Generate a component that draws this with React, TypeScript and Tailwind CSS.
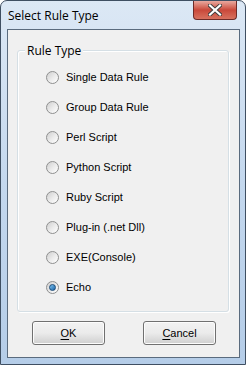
const ruleTypes = [
  "Single Data Rule",
  "Group Data Rule",
  "Perl Script",
  "Python Script",
  "Ruby Script",
  "Plug-in (.net Dll)",
  "EXE(Console)",
  "Echo",
];

function CloseButton() {
  return (
    <div className="mr-[3px] flex h-[19px] w-[44px] items-center justify-center rounded-b-[4px] border border-t-0 border-[#6d2b28] bg-gradient-to-b from-[#e8a89f] via-[#c9483a] to-[#d7715f]">
      <svg width="14" height="12" viewBox="0 0 14 12">
        <path d="M2 1.5 L12 10.5 M12 1.5 L2 10.5" stroke="#3d3d3d" strokeWidth="4" strokeLinecap="square" />
        <path d="M2 1.5 L12 10.5 M12 1.5 L2 10.5" stroke="#ffffff" strokeWidth="2.2" strokeLinecap="square" />
      </svg>
    </div>
  );
}

function Radio({ label, checked }: { label: string; checked?: boolean }) {
  return (
    <label className="flex h-[30px] items-center gap-[7px]">
      <span className="flex h-[13px] w-[13px] items-center justify-center rounded-full border border-[#8e8f8f] bg-gradient-to-br from-[#cfcfcf] via-[#eaeaea] to-[#ffffff]">
        {checked && (
          <span className="h-[7px] w-[7px] rounded-full border border-[#1a4a78] bg-gradient-to-br from-[#7ec3f0] to-[#1565a8]" />
        )}
      </span>
      <span>{label}</span>
    </label>
  );
}

function DialogButton({ hotkey, rest }: { hotkey: string; rest: string }) {
  return (
    <button className="h-[24px] w-[73px] rounded-[3px] border border-[#707070] bg-gradient-to-b from-[#f2f2f2] via-[#ebebeb] to-[#cfcfcf] text-center text-black shadow-[inset_0_0_0_1px_#fcfcfc]">
      <span className="underline underline-offset-[2px]">{hotkey}</span>
      {rest}
    </button>
  );
}

export default function App() {
  return (
    <div className="flex h-[365px] w-[246px] flex-col rounded-t-[7px] border border-[#3f4f62] bg-gradient-to-b from-[#dce8f5] via-[#c4d8ee] to-[#b5cde8] pb-[6px] pl-[6px] pr-[5px] font-['Liberation_Sans',sans-serif] text-[11px] text-black">
      <div className="flex h-[28px] items-start justify-between">
        <span className="mt-[7px] pl-[1px] font-['Open_Sans',sans-serif] text-[12px] leading-[15px] text-black">
          Select Rule Type
        </span>
        <CloseButton />
      </div>

      <div className="flex flex-1 flex-col border border-[#5a6b7e] bg-[#f0f0f0]">
        <div className="relative ml-[9px] mr-[10px] mt-[20px] rounded-[3px] border border-[#d5dfe5] pb-[9px] pl-[28px] pt-[11px] shadow-[inset_1px_1px_0_#ffffff,1px_1px_0_#ffffff]">
          <span className="absolute left-[7px] top-[-8px] bg-[#f0f0f0] px-[2px] font-['Open_Sans',sans-serif] text-[12px] leading-[15px]">
            Rule Type
          </span>
          {ruleTypes.map((t) => (
            <Radio key={t} label={t} checked={t === "Echo"} />
          ))}
        </div>

        <div className="ml-[24px] mt-[9px] flex gap-[38px]">
          <DialogButton hotkey="O" rest="K" />
          <DialogButton hotkey="C" rest="ancel" />
        </div>
      </div>
    </div>
  );
}
